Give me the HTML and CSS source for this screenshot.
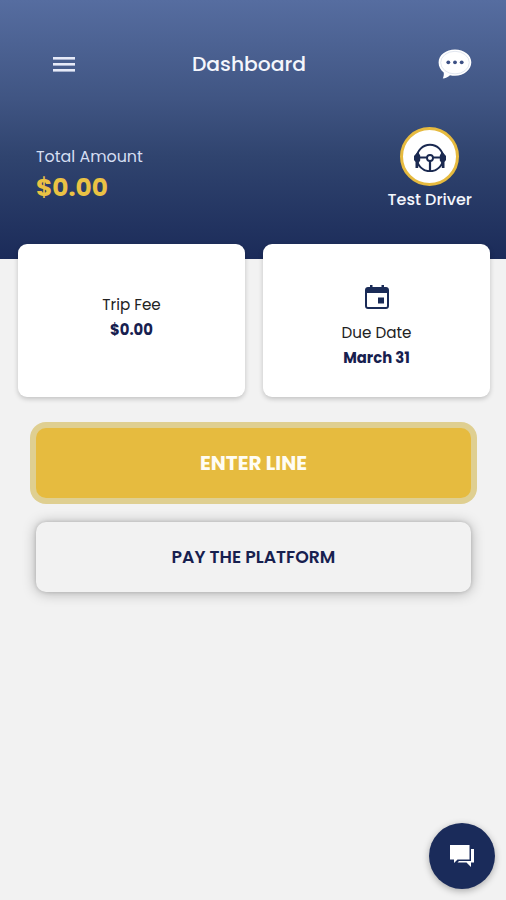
FILE: index.html
```html
<!DOCTYPE html>
<html lang="en">
<head>
    <meta charset="UTF-8">
    <meta name="viewport" content="width=device-width, initial-scale=1.0">
    <title>Dashboard</title>
    <link rel="stylesheet" href="styles.css">
</head>
<body>
    <header class="header">
        <nav class="navbar">
            <button class="icon-btn" aria-label="Menu">
                <svg width="22" height="15" viewBox="0 0 22 15" fill="#e6eaf8">
                    <rect width="22" height="2.6"/>
                    <rect y="6" width="22" height="2.6"/>
                    <rect y="12" width="22" height="2.6"/>
                </svg>
            </button>
            <h1>Dashboard</h1>
            <button class="icon-btn" aria-label="Messages">
                <svg width="34" height="30" viewBox="0 0 34 30">
                    <path d="M17 .5C26 .5 33.300 6 33.300 13.300S26 26.800 17 26.800c-1.800 0-3.500-.2-5-.6-2 1.700-4.500 3-7.200 3.300.9-2 1.200-4.200.9-6C2.500 21 .6 17.400.6 13.400.6 6 8 .5 17 .5z" fill="#fff"/>
                    <ellipse cx="17" cy="13.600" rx="14.300" ry="11.300" fill="none" stroke="#cdd5e4" stroke-width=".6"/>
                    <g fill="#3c5084">
                        <circle cx="10.300" cy="13.300" r="1.900"/>
                        <circle cx="17" cy="13.300" r="1.900"/>
                        <circle cx="23.700" cy="13.300" r="1.900"/>
                    </g>
                </svg>
            </button>
        </nav>
        <div class="summary">
            <div class="total">
                <p class="total-label">Total Amount</p>
                <p class="total-value">$0.00</p>
            </div>
            <div class="driver">
                <div class="avatar">
                    <svg width="34" height="30" viewBox="0 0 34 30" fill="none" stroke="#1a2950">
                        <circle cx="17" cy="16" r="13.200" stroke-width="2"/>
                        <circle cx="17" cy="16" r="3" stroke-width="1.900"/>
                        <path d="M4 15.500h10M20 15.500h10M17 19v10" stroke-width="2.200"/>
                        <path d="M5 9.500 1 14v4l1.500 2v6h2.700v-4.500l2-3v-5zM29 9.500l4 4.500v4l-1.500 2v6h-2.700v-4.500l-2-3v-5z" fill="#1a2950" stroke="none"/>
                    </svg>
                </div>
                <p>Test Driver</p>
            </div>
        </div>
    </header>

    <main>
        <section class="cards">
            <div class="card trip">
                <p>Trip Fee</p>
                <p><strong>$0.00</strong></p>
            </div>
            <div class="card due">
                <svg class="calendar" width="24" height="24" viewBox="0 0 24 24" fill="#1a2b57">
                    <path d="M3 2h2V0h2.500v2h9V0H19v2h2c1.700 0 3 1.300 3 3v16c0 1.700-1.300 3-3 3H3c-1.700 0-3-1.300-3-3V5c0-1.700 1.300-3 3-3zm-1 6v13c0 .6.500 1 1 1h18c.5 0 1-.4 1-1V8zM13 12.500h6v6h-6z" fill-rule="evenodd"/>
                </svg>
                <p>Due Date</p>
                <p><strong>March 31</strong></p>
            </div>
        </section>

        <section class="actions">
            <button class="btn btn-primary">ENTER LINE</button>
            <button class="btn btn-secondary">PAY THE PLATFORM</button>
        </section>
    </main>

    <button class="fab" aria-label="Chat">
        <svg width="24" height="22" viewBox="0 0 24 22" fill="#fff">
            <path d="M0 0h19.500v14.500H7.500L4 18v-3.500H0z"/>
            <path d="M21 4h3v13.500h-3V22l-4.500-4.500H7.500L9 16h12z"/>
        </svg>
    </button>
</body>
</html>
```
FILE: styles.css
```css
/* Reset and Base Styles */
* {
    margin: 0;
    padding: 0;
    box-sizing: border-box;
}

body {
    min-height: 100vh;
    background: #f2f2f2;
    font-family: Poppins, Inter, sans-serif;
    color: #222;
}

button {
    border: none;
    background: none;
    font: inherit;
    cursor: pointer;
}

svg {
    display: block;
}

/* Header */
.header {
    height: 259px;
    padding: 44px 34px 0 36px;
    background: linear-gradient(#566da0, #405583 38%, #30446f 60%, #1b2b59);
    color: #f4f6fc;
}

.navbar {
    display: grid;
    grid-template-columns: 57px 1fr 79px;
    align-items: center;
    height: 40px;
}

.navbar .icon-btn:first-child {
    justify-self: end;
    margin-right: 18px;
}

.navbar .icon-btn:last-child {
    justify-self: end;
}

.navbar h1 {
    padding-left: 12px;
    font-size: 20.3px;
    font-weight: 500;
    line-height: 40px;
    text-align: center;
}

.summary {
    display: flex;
    justify-content: space-between;
    margin-top: 43px;
}

.total {
    padding-top: 18px;
    line-height: 24px;
}

.total-label {
    font-size: 15.9px;
    color: #d5def2;
}

.total-value {
    margin-top: 7px;
    font-size: 24.8px;
    font-weight: 700;
    color: #eac244;
}

.driver {
    display: flex;
    flex-direction: column;
    align-items: center;
    font-size: 16px;
    font-weight: 500;
    line-height: 24px;
}

.avatar {
    display: flex;
    align-items: center;
    justify-content: center;
    width: 59px;
    height: 59px;
    margin-bottom: 2px;
    border: 3px solid #e6ba3f;
    border-radius: 50%;
    background: #fff;
}

/* Cards */
.cards {
    display: grid;
    grid-template-columns: 1fr 1fr;
    gap: 18px;
    margin-top: -15px;
    padding: 0 16px 0 18px;
}

.card {
    display: flex;
    flex-direction: column;
    align-items: center;
    height: 153px;
    border-radius: 9px;
    background: #fff;
    box-shadow: 0 2px 5px rgba(0, 0, 0, 0.2);
    font-size: 15.2px;
    line-height: 24.5px;
}

.trip {
    padding-top: 49px;
}

.due {
    padding-top: 41px;
}

.calendar {
    margin-bottom: 12px;
}

.card strong {
    font-size: 14.8px;
    font-weight: 700;
    color: #17204f;
}

/* Actions */
.actions {
    display: flex;
    flex-direction: column;
    gap: 24px;
    padding: 31px 35px 0 36px;
}

.btn {
    height: 70px;
    border-radius: 10px;
}

.btn-primary {
    background: #e6bb3f;
    box-shadow: 0 0 0 6px #dfcf91;
    font-size: 20px;
    font-weight: 700;
    color: #fffdf4;
}

.btn-secondary {
    background: #f2f2f2;
    box-shadow: 0 1px 14px rgba(0, 0, 0, 0.28), 0 0 4px rgba(0, 0, 0, 0.15);
    font-size: 17.3px;
    font-weight: 600;
    color: #17204f;
}

/* Keeps the neighbour's shadow below the gold ring */
.btn-primary {
    position: relative;
    z-index: 1;
}

/* Floating chat button */
.fab {
    position: fixed;
    right: 11px;
    bottom: 11px;
    display: flex;
    align-items: center;
    justify-content: center;
    width: 66px;
    height: 66px;
    border-radius: 50%;
    background: #1a2b5a;
    box-shadow: 0 2px 7px rgba(0, 0, 0, 0.3);
}
```
